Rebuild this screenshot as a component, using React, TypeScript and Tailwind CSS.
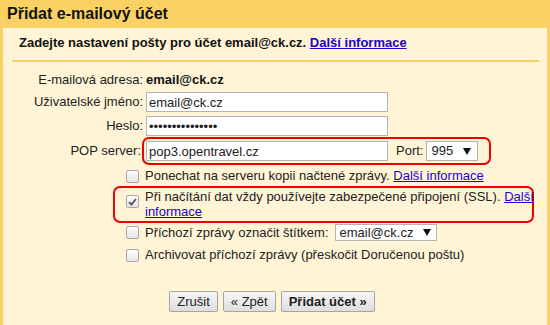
import React from 'react';

const FONT = { fontFamily: '"Liberation Sans", Arial, sans-serif' };

function Arrow() {
  return (
    <svg width="8" height="7" viewBox="0 0 8 7" className="shrink-0">
      <path d="M0 0 H8 L4 7 Z" fill="#111" />
    </svg>
  );
}

function Checkbox({ checked = false }: { checked?: boolean }) {
  return (
    <span className="flex h-[13px] w-[13px] shrink-0 items-center justify-center rounded-[2px] border border-[#a8a8a8] bg-gradient-to-b from-[#fcfcfc] to-[#e6e6e6]">
      {checked && (
        <svg width="9" height="8" viewBox="0 0 9 8">
          <path d="M1 4.2 L3.4 6.6 L8 1" stroke="#555" strokeWidth="1.8" fill="none" />
        </svg>
      )}
    </span>
  );
}

function TextBox({ value, type = 'text' }: { value: string; type?: string }) {
  return (
    <input
      type={type}
      readOnly
      defaultValue={value}
      className="h-[20px] w-[242px] border border-[#b4b4b4] bg-white px-[2px] text-[13px] text-[#222] outline-none"
      style={FONT}
    />
  );
}

function Button({ children, primary = false }: { children: React.ReactNode; primary?: boolean }) {
  return (
    <button
      className={`h-[21px] rounded-[2px] border border-[#a5a5a5] bg-gradient-to-b from-[#f7f7f7] to-[#dedede] px-[7px] text-[13px] leading-[19px] text-[#222] ${
        primary ? 'font-bold' : ''
      }`}
      style={FONT}
    >
      {children}
    </button>
  );
}

export default function App() {
  return (
    <div className="h-[325px] w-[550px] overflow-hidden bg-[#fad163] text-[13px] text-[#222]" style={FONT}>
      <div className="h-[28px] pl-[7px] pt-[5px] text-[16px] font-bold leading-[18px] text-[#111]">
        Přidat e-mailový účet
      </div>

      <div className="mx-[3px] h-[297px] bg-[#fff5d6]">
        <div className="pl-[16px] pt-[7px] font-bold leading-[16px] text-[#111]">
          Zadejte nastavení pošty pro účet email@ck.cz.{' '}
          <a className="text-[#2200cc] underline">Další informace</a>
        </div>
        <div className="ml-[9px] mr-[8px] mt-[9px] h-[2px] bg-[#fad163]" />

        <div className="mt-[10px] flex h-[16px] items-center leading-[16px]">
          <div className="w-[140px] text-right">E-mailová adresa:</div>
          <div className="ml-[3px] font-bold text-[#111]">email@ck.cz</div>
        </div>

        <div className="mt-[4px] flex h-[20px] items-center">
          <div className="w-[140px] text-right">Uživatelské jméno:</div>
          <div className="ml-[3px]">
            <TextBox value="email@ck.cz" />
          </div>
        </div>

        <div className="mt-[4px] flex h-[20px] items-center">
          <div className="w-[140px] text-right">Heslo:</div>
          <div className="ml-[3px]">
            <TextBox type="password" value="xxxxxxxxxxxxxxx" />
          </div>
        </div>

        <div className="mt-[1px] flex h-[28px] items-center">
          <div className="w-[139px] pr-[1px] text-right">POP server:</div>
          <div className="flex h-[28px] items-center rounded-[7px] border-2 border-[#ee0000] pl-[2px] pr-[11px]">
            <TextBox value="pop3.opentravel.cz" />
            <span className="ml-[8px]">Port:</span>
            <div className="ml-[3px] flex h-[20px] w-[52px] items-center justify-between border border-[#b4b4b4] bg-white pl-[4px] pr-[6px]">
              <span>995</span>
              <Arrow />
            </div>
          </div>
        </div>

        <div className="mt-[3px] flex h-[16px] items-center gap-[6px] pl-[123px] leading-[16px]">
          <Checkbox />
          <span>
            Ponechat na serveru kopii načtené zprávy.{' '}
            <a className="text-[#2200cc] underline">Další informace</a>
          </span>
        </div>

        <div className="ml-[110px] mr-[13px] mt-[2px] flex h-[37px] items-start gap-[6px] rounded-[7px] border-2 border-[#ee0000] pl-[11px] pt-[1px]">
          <div className="mt-[6px]">
            <Checkbox checked />
          </div>
          <div className="shrink-0 whitespace-nowrap leading-[15px]">
            Při načítání dat vždy používejte zabezpečené připojení (SSL).{' '}
            <a className="text-[#2200cc] underline">
              Další
              <br />
              informace
            </a>
          </div>
        </div>

        <div className="mt-[1px] flex h-[17px] items-center gap-[6px] pl-[123px]">
          <Checkbox />
          <span>Příchozí zprávy označit štítkem:</span>
          <div className="flex h-[17px] w-[102px] items-center justify-between border border-[#b4b4b4] bg-white pl-[4px] pr-[5px] leading-[15px]">
            <span>email@ck.cz</span>
            <Arrow />
          </div>
        </div>

        <div className="mt-[6px] flex h-[16px] items-center gap-[6px] pl-[123px] leading-[16px]">
          <Checkbox />
          <span>Archivovat příchozí zprávy (přeskočit Doručenou poštu)</span>
        </div>

        <div className="mt-[28px] flex justify-center gap-[5px] pr-[6px]">
          <Button>Zrušit</Button>
          <Button>« Zpět</Button>
          <Button primary>Přidat účet »</Button>
        </div>
      </div>
    </div>
  );
}
